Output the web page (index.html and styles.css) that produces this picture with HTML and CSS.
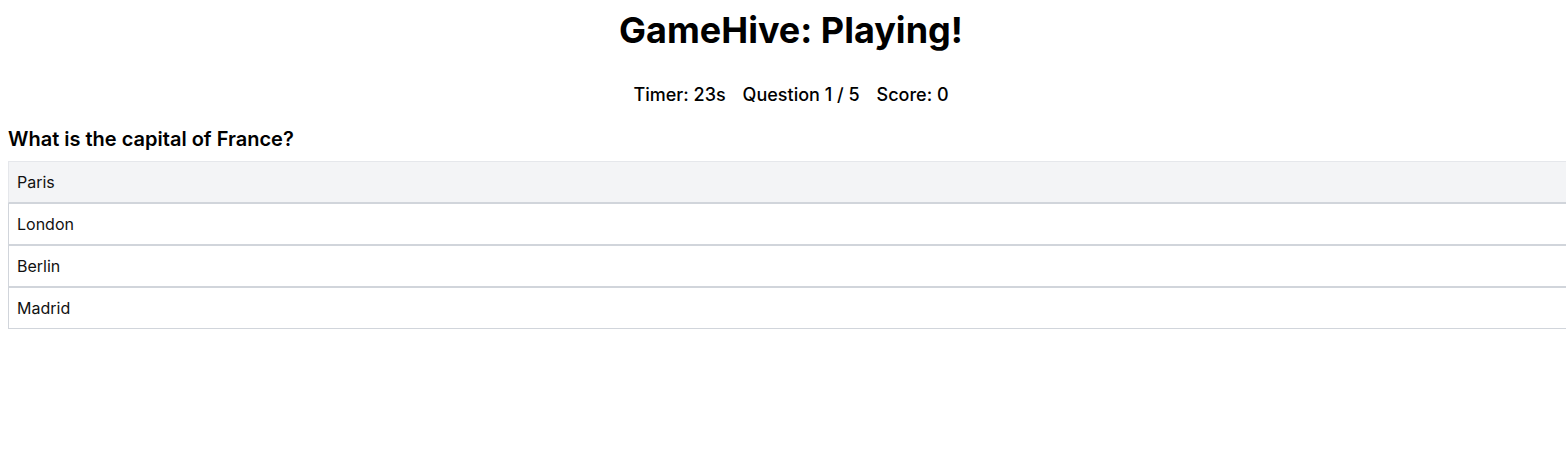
FILE: index.html
```html
<!DOCTYPE html>
<html lang="en">
<head>
<meta charset="utf-8">
<title>GameHive</title>
<link rel="stylesheet" href="styles.css">
</head>
<body>
<main class="game">
  <h1 class="title">GameHive: Playing!</h1>
  <div class="stats">
    <span>Timer: 23s</span>
    <span>Question 1 / 5</span>
    <span>Score: 0</span>
  </div>
  <h2 class="question">What is the capital of France?</h2>
  <div class="options">
    <button class="option option-hover">Paris</button>
    <button class="option">London</button>
    <button class="option">Berlin</button>
    <button class="option">Madrid</button>
  </div>
</main>
</body>
</html>
```

FILE: styles.css
```css
html, body {
  margin: 0;
  padding: 0;
  background: #ffffff;
  overflow: hidden;
}
body {
  font-family: Inter, "Noto Sans", sans-serif;
  color: #000;
  padding: 8px 0 8px 8px;
}
.game {
  width: 100vw;
}
.title {
  margin: 2px 0 0;
  font-size: 36px;
  line-height: 40px;
  font-weight: 700;
  text-align: center;
}
.stats {
  margin-top: 31px;
  display: flex;
  justify-content: center;
  gap: 17px;
  font-size: 18px;
  line-height: 28px;
  font-weight: 500;
}
.question {
  margin: 16px 0 8px;
  font-size: 20px;
  line-height: 28px;
  font-weight: 600;
}
.options {
  display: flex;
  flex-direction: column;
}
.option {
  display: block;
  width: 100%;
  height: 42px;
  box-sizing: border-box;
  text-align: left;
  padding: 0 8px;
  font-family: inherit;
  font-size: 16px;
  color: #111;
  background: #ffffff;
  border: 1px solid #d1d5db;
  border-radius: 0;
  margin: 0;
}
.option-hover {
  background: #f3f4f6;
  border-color: #e5e7eb #e5e7eb #d1d5db;
}
```
